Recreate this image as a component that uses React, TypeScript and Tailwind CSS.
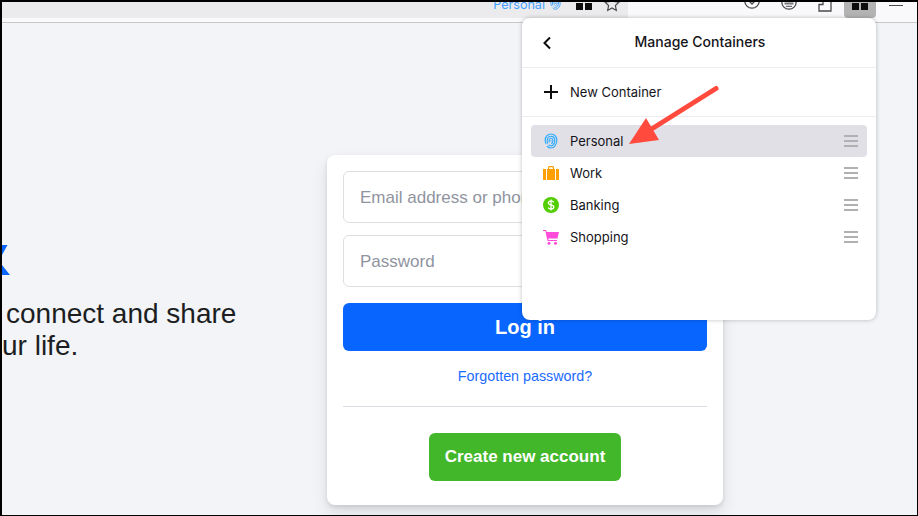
const panelFont = { fontFamily: 'Inter, "Noto Sans", sans-serif' }

const Fingerprint = ({ className }: { className?: string }) => (
  <svg viewBox="0 0 16 16" fill="none" stroke="currentColor" strokeWidth="1.2" className={className}>
    <path d="M3.200 11C2.500 9.800 2.200 8.800 2.200 7.500 2.200 3.500 4.700 1 8 1s5.800 2.500 5.800 6.500c0 3.500-2.300 7.500-5.800 7.500-1.700 0-3-.8-4-2" />
    <path d="M4.800 10.500c-.4-.9-.6-1.900-.6-3C4.200 5 5.800 3.300 8 3.300s3.800 1.700 3.800 4.200c0 2.600-1.600 5.300-3.800 5.300-1 0-1.800-.5-2.300-1.200" />
    <path d="M6.400 9.500C6.200 8.900 6.100 8.200 6.100 7.500 6.100 6.300 6.900 5.500 8 5.500s1.900.8 1.900 2c0 1.500-.8 3-1.900 3" />
    <path d="M8 7.200v1.300" />
  </svg>
)

const Squares = ({ className }: { className?: string }) => (
  <div className={`flex gap-[2px] ${className ?? ''}`}>
    <div className="h-[7px] w-[7px] bg-[#0c0c0d]" />
    <div className="h-[7px] w-[7px] bg-[#0c0c0d]" />
  </div>
)

const Grip = () => (
  <div className="ml-auto flex w-[14px] flex-col gap-[3px]">
    <div className="h-[2px] bg-[#b1b1b3]" />
    <div className="h-[2px] bg-[#b1b1b3]" />
    <div className="h-[2px] bg-[#b1b1b3]" />
  </div>
)

const containers = [
  {
    name: 'Personal',
    active: true,
    icon: <Fingerprint className="h-4 w-4 text-[#37adff]" />,
  },
  {
    name: 'Work',
    icon: (
      <svg viewBox="0 0 16 16" className="h-4 w-4">
        <path d="M5 4V2.500C5 1.700 5.700 1 6.500 1h3c.8 0 1.500.7 1.500 1.500V4H9.800V2.300H6.200V4z" fill="#ff9f00" />
        <rect x="0" y="4" width="3" height="11" fill="#ff9f00" />
        <rect x="4" y="4" width="8" height="11" fill="#ff9f00" />
        <rect x="13" y="4" width="3" height="11" fill="#ff9f00" />
      </svg>
    ),
  },
  {
    name: 'Banking',
    icon: (
      <svg viewBox="0 0 16 16" fill="none" className="h-4 w-4">
        <circle cx="8" cy="8" r="8" fill="#51cd00" />
        <path d="M10.800 5.400C10.200 4.400 9.200 3.900 8 3.900c-1.600 0-2.700.9-2.700 2.100 0 2.700 5.500 1.300 5.500 4 0 1.200-1.200 2.100-2.800 2.100-1.300 0-2.300-.6-2.900-1.500M8 2.500v11" stroke="#fff" strokeWidth="1.300" />
      </svg>
    ),
  },
  {
    name: 'Shopping',
    icon: (
      <svg viewBox="0 0 16 16" className="h-4 w-4">
        <path d="M0 1h3l.8 2H16l-1.500 6.500H5.200L5.600 11H14v1H4.600L3.800 9 2.400 2H0z" fill="#ff4bda" />
        <circle cx="6" cy="14.200" r="1.500" fill="#ff4bda" />
        <circle cx="12.500" cy="14.200" r="1.500" fill="#ff4bda" />
      </svg>
    ),
  },
]

export default function App() {
  return (
    <div className="relative box-border h-[516px] w-[918px] overflow-hidden border-t-2 border-r border-b border-l-2 border-black bg-[#f2f4f8]">
      {/* browser toolbar, cut off by the crop */}
      <div className="flex h-[21px] border-b border-[#c8c8ca] bg-[#f9f9fb]">
        <div className="flex h-4 w-[626px] items-start justify-end overflow-hidden bg-[#ebebed] pr-2">
          <span className="-mt-[5px] text-[12.6px] leading-[16px] text-[#45a1ff]" style={panelFont}>
            Personal
          </span>
          <Fingerprint className="-mt-[5px] ml-1 h-[13px] w-[13px] shrink-0 text-[#45a1ff]" />
          <Squares className="mt-[1px] ml-[14px]" />
          <svg viewBox="0 0 16 16" fill="none" stroke="#4a4a4f" strokeWidth="1.200" className="-mt-[6px] ml-3 h-4 w-4">
            <path d="M8 1l2.100 4.500 4.900.6-3.600 3.400.9 4.900L8 12l-4.300 2.400.9-4.900L1 6.100l4.900-.6z" />
          </svg>
        </div>
        <div className="flex h-full flex-1 items-start overflow-hidden">
          <svg viewBox="0 0 16 16" fill="none" stroke="#4a4a4f" strokeWidth="1.300" className="-mt-[9px] ml-[116px] h-4 w-4">
            <circle cx="8" cy="8" r="7.200" />
            <path d="M5.500 8.500L8 11l2.500-2.500" />
          </svg>
          <svg viewBox="0 0 16 16" fill="none" stroke="#4a4a4f" strokeWidth="1.300" className="-mt-[8px] ml-[21px] h-4 w-4">
            <circle cx="8" cy="8" r="7.200" />
            <path d="M3.500 9.500h9" strokeWidth="2" stroke="#77777a" />
            <path d="M5 12.300h6" strokeWidth="1" />
          </svg>
          <svg viewBox="0 0 14 16" fill="none" stroke="#4a4a4f" strokeWidth="1.300" className="-mt-[6px] ml-[21px] h-4 w-[14px]">
            <path d="M1 8.500h4V5h8v10H1z" />
          </svg>
          <div className="ml-3 flex h-4 w-8 items-start justify-center rounded-b-[4px] bg-[#b3b3b3] pt-[1px]">
            <Squares />
          </div>
          <div className="mt-[3px] ml-[13px] h-[1px] w-[14px] bg-[#4a4a4f]" />
        </div>
      </div>

      {/* login page */}
      <div className="flex items-start">
        <div className="mt-[222px] w-[325px] shrink-0 overflow-hidden text-[28px] leading-[32px] text-[#1c1e21]" style={{ fontFamily: '"Liberation Sans", Arial, sans-serif' }}>
          <svg viewBox="0 0 8 30" className="h-[30px] w-2">
            <path d="M0 0h5.500L0 10zM0 20l8 10H0z" fill="#0866ff" />
          </svg>
          <div className="mt-[23px] pl-[4px] whitespace-nowrap">connect and share</div>
          <div className="whitespace-nowrap">ur life.</div>
        </div>
        <div
          className="mt-[132px] flex h-[350px] w-[396px] flex-col rounded-[8px] bg-white p-4 shadow-[0_2px_4px_rgba(0,0,0,0.1),0_8px_16px_rgba(0,0,0,0.1)]"
          style={{ fontFamily: '"Liberation Sans", Arial, sans-serif' }}
        >
          <div className="flex h-[52px] items-center rounded-[6px] border border-[#dddfe2] px-4 pt-[2px] text-[17px] whitespace-nowrap text-[#8f94a0]">
            Email address or phone number
          </div>
          <div className="mt-3 flex h-[52px] items-center rounded-[6px] border border-[#dddfe2] px-4 pt-[2px] text-[17px] text-[#8f94a0]">
            Password
          </div>
          <div className="mt-4 flex h-12 items-center justify-center rounded-[6px] bg-[#0866ff] text-[20px] font-bold text-white">
            Log in
          </div>
          <div className="mt-4 text-center text-[14.3px] leading-[18px] text-[#1a6bff]">Forgotten password?</div>
          <div className="mt-[21px] h-px bg-[#dadde1]" />
          <div className="mt-[26px] flex h-12 w-[192px] items-center justify-center self-center rounded-[6px] bg-[#42b72a] text-[17px] font-bold text-white">
            Create new account
          </div>
        </div>
      </div>

      {/* containers popup */}
      <div
        className="absolute top-[16px] left-[520px] h-[302px] w-[354px] rounded-[8px] bg-white text-[13px] text-[#15141a] shadow-[0_0_4px_rgba(0,0,0,0.25)]"
        style={panelFont}
      >
        <div className="relative flex h-[50px] items-center justify-center border-b border-[#ededf0] pb-[2px] pl-[2px] text-[14px] font-medium">
          <svg viewBox="0 0 10 14" fill="none" stroke="#0c0c0d" strokeWidth="2" className="absolute top-[18px] left-5 h-[14px] w-[10px]">
            <path d="M8 1.500L2.500 7 8 12.500" />
          </svg>
          Manage Containers
        </div>
        <div className="flex h-[49px] items-center gap-[11px] border-b border-[#ededf0] pt-[2px] pl-[21px]">
          <svg viewBox="0 0 16 16" stroke="#0c0c0d" strokeWidth="2" className="-mt-[2px] h-4 w-4">
            <path d="M8 1v14M1 8h14" />
          </svg>
          New Container
        </div>
        <div className="flex flex-col px-[9px] pt-2">
          {containers.map((c) => (
            <div
              key={c.name}
              className={`flex h-8 items-center gap-[11px] rounded-[4px] pr-[9px] pl-3 ${c.active ? 'bg-[#e0e0e6]' : ''}`}
            >
              {c.icon}
              <span className="mt-[2px]">{c.name}</span>
              <Grip />
            </div>
          ))}
        </div>
      </div>

      {/* annotation arrow */}
      <svg className="absolute top-[-2px] left-[-2px] h-[516px] w-[918px]" viewBox="0 0 918 516" fill="none">
        <path d="M716 88.500L650 130" stroke="#ff4a3d" strokeWidth="5" strokeLinecap="round" />
        <path d="M629 144L646 118L659 140z" fill="#ff4a3d" />
      </svg>
    </div>
  )
}
